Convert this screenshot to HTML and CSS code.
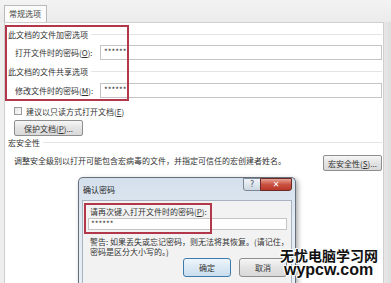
FILE: index.html
```html
<!DOCTYPE html>
<html lang="zh-CN">
<head>
    <meta charset="UTF-8">
    <meta name="viewport" content="width=device-width, initial-scale=1.0">
    <title>常规选项</title>
    <link rel="stylesheet" href="styles.css">
</head>
<body>
    <div class="window">
        <div class="tabs">
            <div class="tab">常规选项</div>
        </div>
        <div class="panel">
            <div class="group-title">此文档的文件加密选项</div>
            <div class="field">
                <span class="label">打开文件时的密码(<u>O</u>):</span>
                <div class="input">******</div>
            </div>
            <div class="group-title">此文档的文件共享选项</div>
            <div class="field field-second">
                <span class="label">修改文件时的密码(<u>M</u>):</span>
                <div class="input">******</div>
            </div>
            <div class="check">
                <span class="box"></span>
                <span>建议以只读方式打开文档(<u>E</u>)</span>
            </div>
            <button class="btn btn-protect">保护文档(<u>P</u>)...</button>
            <div class="group-title group-macro">宏安全性</div>
            <div class="macro">
                <p>调整安全级别以打开可能包含宏病毒的文件，并指定可信任的宏创建者姓名。</p>
                <button class="btn btn-macro">宏安全性(<u>S</u>)...</button>
            </div>
            <div class="mark mark-panel"></div>
        </div>

        <!-- 确认密码 对话框 -->
        <div class="dialog">
            <div class="dialog-title">确认密码</div>
            <div class="cap cap-help">?</div>
            <div class="cap cap-close">✕</div>
            <div class="dialog-body">
                <div class="dialog-label">请再次键入打开文件时的密码(<u>P</u>):</div>
                <div class="input dialog-input">******</div>
                <p class="warning">警告: 如果丢失或忘记密码，则无法将其恢复。(请记住，<br>密码是区分大小写的。)</p>
                <div class="actions">
                    <button class="btn btn-ok">确定</button>
                    <button class="btn">取消</button>
                </div>
                <div class="mark mark-dialog"></div>
            </div>
        </div>

        <div class="watermark">
            <div class="wm-cn">无忧电脑学习网</div>
            <div class="wm-en">wypcw.com</div>
        </div>
    </div>
</body>
</html>
```

FILE: styles.css
```css
body {
    margin: 0;
    background: linear-gradient(90deg, #eeeeee 0%, #eeeeee 97%, #dedede 100%);
    font-family: "Noto Sans CJK SC", "Liberation Sans", sans-serif;
    font-size: 8px;
    color: #333;
    overflow: hidden;
}
.window {
    position: relative;
    height: 283px;
    overflow: hidden;
}
.tabs {
    height: 22px;
    padding-left: 4px;
    box-sizing: border-box;
    padding-top: 5px;
    background: linear-gradient(#f3f3f3, #ebebeb);
}
.tab {
    width: 43px;
    height: 17px;
    box-sizing: border-box;
    border: 1px solid #b9b9b9;
    border-bottom: none;
    background: #fbfbfb;
    line-height: 16px;
    padding-left: 4px;
    color: #444;
}
.panel {
    position: relative;
    width: 380px;
    height: 261px;
    margin-left: 4px;
    box-sizing: border-box;
    border: 1px solid #cfcfcf;
    border-bottom: none;
    background: #fff;
    padding: 0 1px 0 3px;
}
.group-title {
    display: flex;
    align-items: center;
    gap: 3px;
    height: 12px;
    line-height: 12px;
    margin-top: 6px;
}
.group-title::after {
    content: "";
    flex: 1;
    height: 1px;
    margin-top: -1px;
    background: #e4e4e4;
}
.group-macro {
    margin-top: 1px;
}
.field {
    display: flex;
    align-items: center;
    height: 15px;
    margin-top: 4px;
    padding-left: 7px;
}
.field-second {
    margin-top: 5px;
}
.label {
    width: 85px;
    flex: none;
}
.input {
    flex: 1;
    height: 15px;
    box-sizing: border-box;
    border: 1px solid #c4c4c4;
    background: #fff;
    line-height: 12px;
    padding-left: 3px;
}
.check {
    display: flex;
    align-items: center;
    gap: 4px;
    height: 14px;
    margin-top: 6px;
    padding-left: 6px;
}
.box {
    width: 8px;
    height: 8px;
    box-sizing: border-box;
    border: 1px solid #9a9a9a;
    background: linear-gradient(135deg, #e6e6e6, #fafafa);
}
.btn {
    height: 16px;
    box-sizing: border-box;
    border: 1px solid #8e8e8e;
    border-radius: 2px;
    background: linear-gradient(#f6f6f6, #e3e3e3 50%, #d9d9d9);
    font-family: inherit;
    font-size: 8px;
    color: #333;
    padding: 0;
    line-height: 13px;
}
.btn-protect {
    display: block;
    width: 69px;
    margin: 2px 0 0 6px;
}
.macro {
    display: flex;
    justify-content: space-between;
    align-items: flex-start;
    margin-top: 6px;
    padding-left: 6px;
}
.macro p {
    margin: 0;
    line-height: 12px;
}
.btn-macro {
    width: 59px;
}
.mark {
    position: absolute;
    box-sizing: border-box;
    border: 2px solid #b3374a;
}
.mark-panel {
    left: 0;
    top: 2px;
    width: 124px;
    height: 76px;
}

/* 确认密码 对话框 */
.dialog {
    position: absolute;
    left: 78px;
    top: 177px;
    width: 218px;
    height: 106px;
    box-sizing: border-box;
    border: 1px solid #65707c;
    border-bottom: none;
    border-radius: 5px 5px 0 0;
    background: linear-gradient(#d3dfeb, #e2eaf3 40%, #e8eef5);
    box-shadow: 2px 2px 5px rgba(0, 0, 0, 0.35);
}
.dialog-title {
    height: 22px;
    padding: 2px 0 0 4px;
    box-sizing: border-box;
    line-height: 20px;
    color: #222;
}
.cap {
    position: absolute;
    top: 0;
    height: 13px;
    box-sizing: border-box;
    border: 1px solid #7d8896;
    text-align: center;
    font-family: "DejaVu Sans", sans-serif;
    font-size: 8px;
    line-height: 11px;
}
.cap-help {
    left: 164px;
    width: 18px;
    border-radius: 0 0 0 3px;
    background: linear-gradient(#f0f4f8, #cdd7e2);
    color: #4a5668;
}
.cap-close {
    left: 181px;
    width: 32px;
    border-color: #6b2a25;
    border-radius: 0 0 3px 0;
    background: linear-gradient(#e6a396, #c9513f 50%, #b8382a);
    color: #fff;
    font-weight: bold;
}
.dialog-body {
    position: relative;
    margin: 0 3px;
    height: 83px;
    box-sizing: border-box;
    border: 1px solid #a7b3c0;
    border-bottom: none;
    background: #f2f2f2;
    padding: 5px 4px 0 7px;
}
.dialog-label {
    line-height: 12px;
}
.dialog-input {
    height: 12px;
    margin-left: -2px;
    line-height: 9px;
    padding-left: 2px;
}
.warning {
    margin: 7px 0 0;
    line-height: 10px;
    white-space: nowrap;
}
.actions {
    display: flex;
    justify-content: flex-end;
    gap: 8px;
    margin-top: 1px;
}
.actions .btn {
    width: 48px;
    height: 19px;
    border-radius: 3px;
    line-height: 16px;
}
.btn-ok {
    border-color: #3d7bad;
    background: linear-gradient(#eef6fb, #dbe9f4 50%, #c9def0);
}
.mark-dialog {
    left: 1px;
    top: 2px;
    width: 128px;
    height: 31px;
}

/* 水印 */
.watermark {
    position: absolute;
    left: 280px;
    top: 248px;
    color: #111;
    font-weight: bold;
    text-shadow: 1px 0 0 #fff, -1px 0 0 #fff, 0 1px 0 #fff, 0 -1px 0 #fff, 1px 1px 0 #fff, -1px -1px 0 #fff;
}
.wm-cn {
    font-size: 14px;
    line-height: 15px;
}
.wm-en {
    font-family: "Liberation Sans", Arial, sans-serif;
    font-size: 16px;
    line-height: 14px;
    margin-left: 4px;
}
```
